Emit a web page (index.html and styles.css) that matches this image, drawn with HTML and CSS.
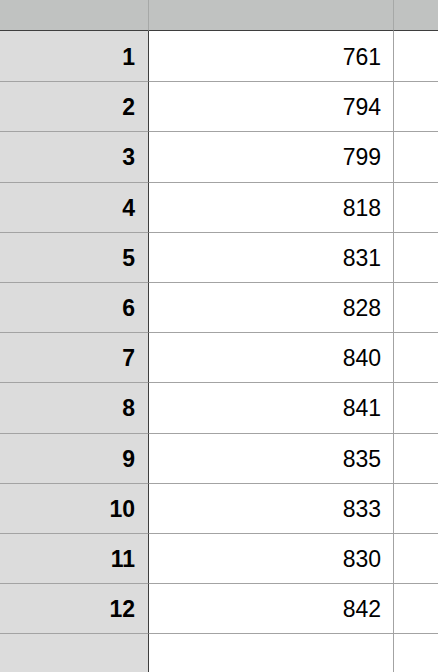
FILE: index.html
```html
<!DOCTYPE html>
<html>
<head>
<meta charset="utf-8">
<link rel="stylesheet" href="styles.css">
</head>
<body>
<div class="sheet">
  <div class="hcell"></div>
  <div class="hcell"></div>
  <div class="hcell hlast"></div>

  <div class="rh top">1</div><div class="c top">761</div><div class="c clast top"></div>
  <div class="rh">2</div><div class="c">794</div><div class="c clast"></div>
  <div class="rh">3</div><div class="c">799</div><div class="c clast"></div>
  <div class="rh">4</div><div class="c">818</div><div class="c clast"></div>
  <div class="rh">5</div><div class="c">831</div><div class="c clast"></div>
  <div class="rh">6</div><div class="c">828</div><div class="c clast"></div>
  <div class="rh">7</div><div class="c">840</div><div class="c clast"></div>
  <div class="rh">8</div><div class="c">841</div><div class="c clast"></div>
  <div class="rh">9</div><div class="c">835</div><div class="c clast"></div>
  <div class="rh">10</div><div class="c">833</div><div class="c clast"></div>
  <div class="rh">11</div><div class="c">830</div><div class="c clast"></div>
  <div class="rh">12</div><div class="c">842</div><div class="c clast"></div>
  <div class="rh"></div><div class="c"></div><div class="c clast"></div>
</div>
</body>
</html>
```

FILE: styles.css
```css
html, body {
  margin: 0;
  padding: 0;
  background: #ffffff;
  overflow: hidden;
}

.sheet {
  display: grid;
  grid-template-columns: 149px 245px 1fr;
  grid-template-rows: 31px;
  grid-auto-rows: 50.2px;
  font-family: "Liberation Sans", Arial, sans-serif;
  color: #000;
}

.hcell {
  box-sizing: border-box;
  background: #c0c2c1;
  border-right: 1px solid #a6a8a7;
  border-bottom: 1px solid #3e3e3e;
}

.hlast {
  border-right: none;
}

.rh {
  box-sizing: border-box;
  background: #dcdcdc;
  border-right: 1px solid #3e3e3e;
  border-top: 1px solid #a3a3a3;
  display: flex;
  align-items: center;
  justify-content: flex-end;
  padding-top: 2px;
  padding-right: 13px;
  font-weight: bold;
  font-size: 23px;
}

.c {
  box-sizing: border-box;
  border-right: 1px solid #a3a3a3;
  border-top: 1px solid #a3a3a3;
  display: flex;
  align-items: center;
  justify-content: flex-end;
  padding-top: 2px;
  padding-right: 12px;
  font-size: 23px;
}

.top {
  border-top: none;
}

.clast {
  border-right: none;
}
```
